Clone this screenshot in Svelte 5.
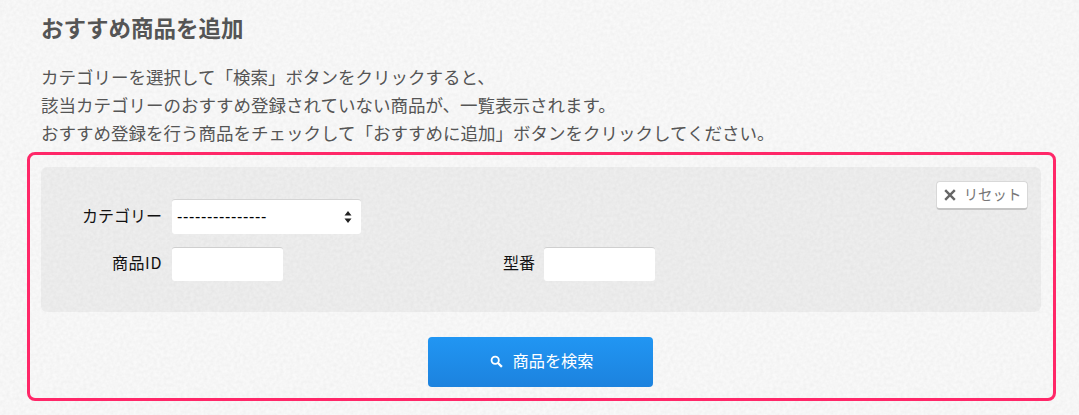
<script lang="ts">
  let category = $state('');
</script>

<main class="page">
  <h2 class="title">おすすめ商品を追加</h2>
  <p class="lead">
    カテゴリーを選択して「検索」ボタンをクリックすると、<br />
    該当カテゴリーのおすすめ登録されていない商品が、一覧表示されます。<br />
    おすすめ登録を行う商品をチェックして「おすすめに追加」ボタンをクリックしてください。
  </p>

  <section class="box">
    <div class="panel">
      <button class="reset" type="button">
        <svg viewBox="0 0 12 12" width="12" height="12" aria-hidden="true">
          <path d="M1.2 1.2l9.6 9.6M10.8 1.2l-9.6 9.6" fill="none" stroke="#666" stroke-width="2.4" />
        </svg>
        <span>リセット</span>
      </button>
      <div class="row">
        <span class="label">カテゴリー</span>
        <div class="select">
          <span>---------------</span>
          <svg viewBox="0 0 8 14" width="8" height="14" aria-hidden="true">
            <path d="M4 1L7.5 5.5H0.5zM4 13L0.5 8.5H7.5z" fill="#222" />
          </svg>
        </div>
      </div>
      <div class="row second">
        <span class="label id">商品ID</span>
        <input class="field" type="text" />
        <span class="label model">型番</span>
        <input class="field" type="text" />
      </div>
    </div>

    <div class="actions">
      <button class="search" type="button">
        <svg viewBox="0 0 14 14" width="13" height="13" aria-hidden="true">
          <circle cx="5.6" cy="5.6" r="3.9" fill="none" stroke="#fff" stroke-width="2" />
          <path d="M8.6 8.6l4.2 4.2" fill="none" stroke="#fff" stroke-width="2.4" />
        </svg>
        <span>商品を検索</span>
      </button>
    </div>
  </section>
</main>

<style>
  :global(body) {
    margin: 0;
    background-color: #f9f9f9;
    background-image: url("data:image/svg+xml,%3Csvg xmlns='http://www.w3.org/2000/svg' width='240' height='240'%3E%3Cfilter id='n'%3E%3CfeTurbulence type='fractalNoise' baseFrequency='.3' numOctaves='2' stitchTiles='stitch'/%3E%3CfeColorMatrix values='0 0 0 0 0 0 0 0 0 0 0 0 0 0 0 .05 0 0 0 -.012'/%3E%3C/filter%3E%3Crect width='240' height='240' filter='url(%23n)'/%3E%3C/svg%3E");
    font-family: "Noto Sans CJK JP", "Liberation Sans", sans-serif;
  }

  .page {
    height: 415px;
    overflow: hidden;
    padding: 0 23px 0 27px;
    box-sizing: border-box;
  }

  .title {
    margin: 0;
    padding: 10px 0 0 14px;
    height: 47px;
    box-sizing: border-box;
    font-size: 22.5px;
    line-height: 34px;
    font-weight: 700;
    color: #555;
  }

  .lead {
    margin: 0;
    padding: 16px 0 0 14px;
    font-size: 17.5px;
    line-height: 28px;
    color: #555;
    white-space: nowrap;
    height: 105px;
    box-sizing: border-box;
  }

  .box {
    height: 249px;
    box-sizing: border-box;
    border: 3px solid #ff2768;
    border-radius: 8px;
    padding: 12px 12px 0 11px;
  }

  .panel {
    position: relative;
    height: 145px;
    box-sizing: border-box;
    padding-top: 32px;
    background: rgba(0, 0, 0, 0.045);
    border-radius: 6px;
  }

  .row {
    display: flex;
    align-items: center;
    height: 35px;
    color: #111;
    font-size: 16px;
  }

  .second {
    height: 34px;
    margin-top: 13px;
  }

  .label {
    width: 121px;
    margin-right: 10px;
    padding-bottom: 4px;
    text-align: right;
    white-space: nowrap;
  }

  .id {
    letter-spacing: 0.6px;
  }

  .model {
    width: 252px;
    margin-right: 9px;
  }

  .select {
    width: 189px;
    height: 35px;
    box-sizing: border-box;
    display: flex;
    align-items: center;
    justify-content: space-between;
    padding: 0 9px 0 5px;
    background: #fff;
    border-radius: 3px;
    border-top: 1px solid #d4d4d4;
    font-family: "Liberation Sans", sans-serif;
    font-size: 16px;
    letter-spacing: 0.67px;
    color: #000;
  }

  .field {
    width: 111px;
    height: 34px;
    box-sizing: border-box;
    background: #fff;
    border: 0;
    border-top: 1px solid #cfcfcf;
    border-radius: 3px;
    padding: 0 6px;
    outline: none;
  }

  .reset {
    position: absolute;
    top: 14px;
    right: 13px;
    width: 92px;
    height: 29px;
    box-sizing: border-box;
    display: flex;
    align-items: center;
    justify-content: center;
    gap: 8px;
    padding: 0 0 3px 1px;
    background: #fff;
    border: 1px solid #d8d8d8;
    border-bottom: 2px solid #c4c4c4;
    border-radius: 4px;
    font-family: inherit;
    font-size: 14.4px;
    color: #777;
  }

  .reset svg {
    margin-top: 3px;
  }

  .actions {
    display: flex;
    justify-content: center;
    padding-top: 25px;
    padding-right: 1px;
  }

  .search {
    width: 225px;
    height: 50px;
    display: flex;
    align-items: center;
    justify-content: center;
    gap: 10px;
    padding: 0 0 5px 2px;
    border: 0;
    border-radius: 4px;
    background: linear-gradient(#2196f3, #1c82de);
    color: #fff;
    font-family: inherit;
    font-size: 16.2px;
  }

  .search svg {
    margin-top: 4px;
  }
</style>
